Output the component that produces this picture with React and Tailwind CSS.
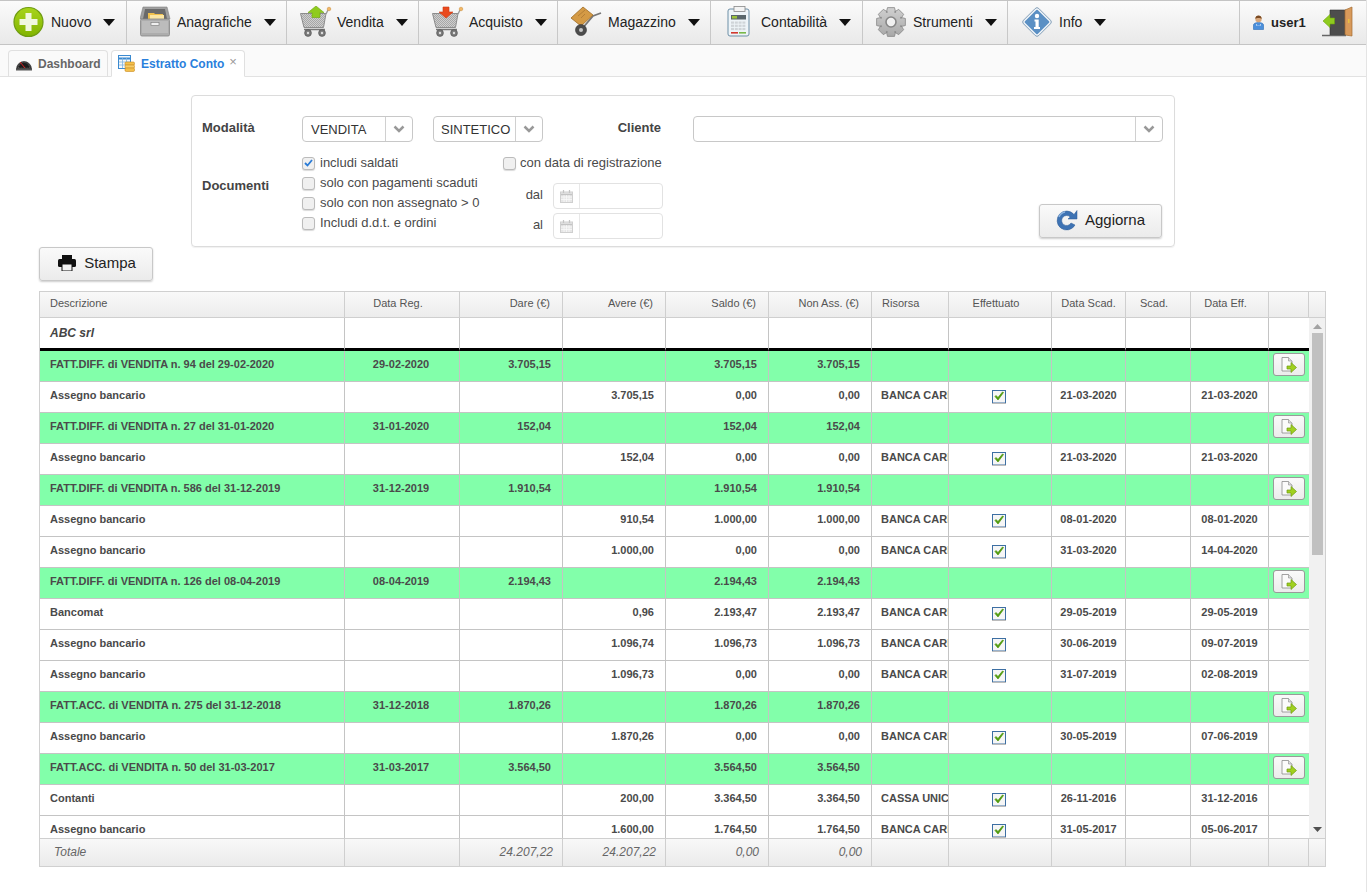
import React from "react";

const GRID =
  "grid grid-cols-[305px_115px_103px_103px_103px_103px_77px_103px_74px_65px_78px_40px]";

const navItems = [
  { label: "Nuovo", icon: <PlusIcon />, w: "w-[127px]", gap: "ml-[7px]" },
  { label: "Anagrafiche", icon: <CabinetIcon />, w: "w-[160px]", gap: "ml-[6px]" },
  { label: "Vendita", icon: <CartIcon up />, w: "w-[132px]", gap: "ml-[6px]" },
  { label: "Acquisto", icon: <CartIcon />, w: "w-[139px]", gap: "ml-[6px]" },
  { label: "Magazzino", icon: <TruckIcon />, w: "w-[153px]", gap: "ml-[6px]" },
  { label: "Contabilità", icon: <CalcIcon />, w: "w-[152px]", gap: "ml-[6px]" },
  { label: "Strumenti", icon: <GearIcon />, w: "w-[145px]", gap: "ml-[6px]" },
  { label: "Info", icon: <InfoIcon />, w: "w-[232px]", gap: "ml-[7px]" },
];

// g = fattura (verde), altrimenti pagamento
const rows = [
  { g: 1, d: "FATT.DIFF. di VENDITA n. 94 del 29-02-2020", reg: "29-02-2020", dare: "3.705,15", saldo: "3.705,15", non: "3.705,15" },
  { d: "Assegno bancario", avere: "3.705,15", saldo: "0,00", non: "0,00", ris: "BANCA CARIGE", scad: "21-03-2020", eff: "21-03-2020" },
  { g: 1, d: "FATT.DIFF. di VENDITA n. 27 del 31-01-2020", reg: "31-01-2020", dare: "152,04", saldo: "152,04", non: "152,04" },
  { d: "Assegno bancario", avere: "152,04", saldo: "0,00", non: "0,00", ris: "BANCA CARIGE", scad: "21-03-2020", eff: "21-03-2020" },
  { g: 1, d: "FATT.DIFF. di VENDITA n. 586 del 31-12-2019", reg: "31-12-2019", dare: "1.910,54", saldo: "1.910,54", non: "1.910,54" },
  { d: "Assegno bancario", avere: "910,54", saldo: "1.000,00", non: "1.000,00", ris: "BANCA CARIGE", scad: "08-01-2020", eff: "08-01-2020" },
  { d: "Assegno bancario", avere: "1.000,00", saldo: "0,00", non: "0,00", ris: "BANCA CARIGE", scad: "31-03-2020", eff: "14-04-2020" },
  { g: 1, d: "FATT.DIFF. di VENDITA n. 126 del 08-04-2019", reg: "08-04-2019", dare: "2.194,43", saldo: "2.194,43", non: "2.194,43" },
  { d: "Bancomat", avere: "0,96", saldo: "2.193,47", non: "2.193,47", ris: "BANCA CARIGE", scad: "29-05-2019", eff: "29-05-2019" },
  { d: "Assegno bancario", avere: "1.096,74", saldo: "1.096,73", non: "1.096,73", ris: "BANCA CARIGE", scad: "30-06-2019", eff: "09-07-2019" },
  { d: "Assegno bancario", avere: "1.096,73", saldo: "0,00", non: "0,00", ris: "BANCA CARIGE", scad: "31-07-2019", eff: "02-08-2019" },
  { g: 1, d: "FATT.ACC. di VENDITA n. 275 del 31-12-2018", reg: "31-12-2018", dare: "1.870,26", saldo: "1.870,26", non: "1.870,26" },
  { d: "Assegno bancario", avere: "1.870,26", saldo: "0,00", non: "0,00", ris: "BANCA CARIGE", scad: "30-05-2019", eff: "07-06-2019" },
  { g: 1, d: "FATT.ACC. di VENDITA n. 50 del 31-03-2017", reg: "31-03-2017", dare: "3.564,50", saldo: "3.564,50", non: "3.564,50" },
  { d: "Contanti", avere: "200,00", saldo: "3.364,50", non: "3.364,50", ris: "CASSA UNICA", scad: "26-11-2016", eff: "31-12-2016" },
  { d: "Assegno bancario", avere: "1.600,00", saldo: "1.764,50", non: "1.764,50", ris: "BANCA CARIGE", scad: "31-05-2017", eff: "05-06-2017" },
];

function PlusIcon() {
  return (
    <svg width="32" height="32" viewBox="0 0 32 32">
      <defs>
        <linearGradient id="pl" x1="0" y1="0" x2="0" y2="1">
          <stop offset="0" stopColor="#a8d41c" />
          <stop offset="1" stopColor="#82b400" />
        </linearGradient>
      </defs>
      <circle cx="15.500" cy="16" r="14.500" fill="url(#pl)" stroke="#6f9c12" strokeWidth="1.200" />
      <path d="M12.500 7h6v6h6v6h-6v6h-6v-6h-6v-6h6z" fill="#f1f8df" />
    </svg>
  );
}

function CabinetIcon() {
  return (
    <svg width="32" height="32" viewBox="0 0 32 32">
      <path d="M3 1h24l3 12H0z" fill="#a0a0a0" stroke="#808080" strokeWidth=".6" />
      <path d="M5 3h20l2 10H3z" fill="#6a6a6a" />
      <path d="M8 7h6l1 1h8v5H8z" fill="#f0c04c" />
      <path d="M10 9h14v4H10z" fill="#fbe6a4" />
      <rect x=".500" y="13" width="29" height="17" rx="1.500" fill="#adadad" stroke="#858585" strokeWidth=".8" />
      <rect x="2" y="15" width="26" height="12" fill="#bcbcbc" />
      <rect x="11" y="16.500" width="8" height="3" fill="#f0f0f0" stroke="#777" strokeWidth=".6" />
    </svg>
  );
}

function CartIcon({ up }) {
  const id = up ? "chk1" : "chk2";
  return (
    <svg width="32" height="32" viewBox="0 0 32 32">
      <defs>
        <pattern id={id} width="2" height="2" patternUnits="userSpaceOnUse">
          <rect width="2" height="2" fill="#cfcfcf" />
          <rect width="1" height="1" fill="#a6a6a6" />
          <rect x="1" y="1" width="1" height="1" fill="#a6a6a6" />
        </pattern>
      </defs>
      <path d="M.5 7.500h25.500l-2.500 14H4z" fill={`url(#${id})`} stroke="#8c8c8c" strokeWidth="1" />
      <path d="M26 8l2-4" stroke="#999" strokeWidth="1.400" fill="none" />
      <circle cx="29" cy="3" r="1.800" fill="#f2b766" stroke="#c98a35" strokeWidth=".5" />
      <path d="M4 23.500h21" stroke="#777" strokeWidth="1.500" />
      <circle cx="8" cy="27" r="3.400" fill="#7a7a7a" stroke="#4a4a4a" strokeWidth=".6" />
      <circle cx="8" cy="27" r="1.200" fill="#ddd" />
      <circle cx="22" cy="27" r="3.400" fill="#7a7a7a" stroke="#4a4a4a" strokeWidth=".6" />
      <circle cx="22" cy="27" r="1.200" fill="#ddd" />
      {up ? (
        <path d="M16 0l8 6.500h-4v5h-8v-5H8z" fill="#8fcb1e" stroke="#6da50e" strokeWidth=".6" />
      ) : (
        <path d="M11 1h6v5h4l-7 6-7-6h4z" fill="#ea4a1e" stroke="#cf3a12" strokeWidth=".6" />
      )}
    </svg>
  );
}

function TruckIcon() {
  return (
    <svg width="32" height="32" viewBox="0 0 32 32">
      <path d="M10 24l12-14 8-3" stroke="#777" strokeWidth="1.800" fill="none" />
      <path d="M12 1l10 8-12 11L0 12z" fill="#d49a45" stroke="#9e6c25" strokeWidth=".8" />
      <path d="M7 10l7-6M10 12l4-4" stroke="#a87430" strokeWidth=".7" />
      <circle cx="10" cy="24" r="5.500" fill="#4c4c4c" stroke="#333" strokeWidth=".6" />
      <circle cx="10" cy="24" r="2" fill="#c8c8c8" />
    </svg>
  );
}

function CalcIcon() {
  const keys = [];
  for (let r = 0; r < 3; r++)
    for (let c = 0; c < 4; c++)
      keys.push(<rect key={r + "-" + c} x={7 + c * 3.800} y={15.500 + r * 3.200} width="3" height="2.200" fill="#cfd4d8" />);
  return (
    <svg width="32" height="32" viewBox="0 0 32 32">
      <rect x="4" y="3" width="21" height="27" rx="2" fill="#eef4f8" stroke="#6d8fa6" strokeWidth="1" />
      <rect x="10" y=".5" width="11" height="5" fill="#f4f4f4" stroke="#888" strokeWidth=".8" />
      <rect x="7" y="9" width="15" height="4.500" fill="#5a666b" />
      <rect x="8" y="10" width="5" height="2.500" fill="#9ac23a" />
      {keys}
      <rect x="7" y="26" width="7" height="1.600" fill="#d23a30" />
      <rect x="15" y="26" width="7" height="1.600" fill="#79b84a" />
    </svg>
  );
}

function gearPath() {
  // ruota dentata a 8 denti
  const pts = [];
  for (let i = 0; i < 8; i++) {
    const a = (i * Math.PI) / 4;
    [[-0.46, 10.500], [-0.24, 14.800], [0.24, 14.800], [0.46, 10.500]].forEach(([da, rad]) => {
      pts.push((15 + rad * Math.cos(a + da)).toFixed(2) + " " + (16 + rad * Math.sin(a + da)).toFixed(2));
    });
  }
  return "M" + pts.join("L") + "z";
}

function GearIcon() {
  return (
    <svg width="32" height="32" viewBox="0 0 32 32">
      <defs>
        <linearGradient id="gr" x1="0" y1="0" x2="0" y2="1">
          <stop offset="0" stopColor="#d0d0d0" />
          <stop offset="1" stopColor="#a8a8a8" />
        </linearGradient>
      </defs>
      <path d={gearPath()} fill="url(#gr)" stroke="#868686" strokeWidth=".8" />
      <circle cx="15" cy="16" r="5" fill="#f0f0f0" stroke="#868686" strokeWidth="1.600" />
    </svg>
  );
}

function InfoIcon() {
  return (
    <svg width="32" height="32" viewBox="0 0 32 32">
      <rect x="6" y="6" width="20" height="20" rx="2" transform="rotate(45 16 16)" fill="#5b90c4" stroke="#f0f4f8" strokeWidth="2" />
      <rect x="5.200" y="5.200" width="21.600" height="21.600" rx="2.500" transform="rotate(45 16 16)" fill="none" stroke="#5a7f9f" strokeWidth=".7" />
      <circle cx="16" cy="10" r="2.200" fill="#fff" />
      <path d="M13.500 13.500h4.200v7.500h1.300v2h-6v-2h1.500v-5.500h-1z" fill="#fff" />
    </svg>
  );
}

function UserIcon() {
  return (
    <svg width="11" height="15" viewBox="0 0 11 15">
      <path d="M.5 14.500V10c0-1.500 2-2.500 5-2.500s5 1 5 2.500v4.500z" fill="#4a8fdc" stroke="#2d6cb4" strokeWidth=".6" />
      <path d="M3 9l2.500 2L8 9v1.500H3z" fill="#eef4fb" />
      <circle cx="5.500" cy="4" r="3.200" fill="#d8a77c" />
      <path d="M2.300 4C2.300 1.500 3.800.5 5.500.5S8.700 1.500 8.700 4C7.500 2.800 3.500 2.800 2.300 4z" fill="#7a4a22" />
    </svg>
  );
}

function DoorIcon() {
  return (
    <svg width="32" height="32" viewBox="0 0 32 32">
      <path d="M8 4h16v25H8z" fill="#4d4d4d" stroke="#2f2f2f" strokeWidth=".6" />
      <path d="M23 4l7-3v29l-7-1z" fill="#d89a5b" stroke="#a36b30" strokeWidth=".7" />
      <path d="M26 13h1.500v4H26z" fill="#e8c040" />
      <path d="M0 29.500h24" stroke="#666" strokeWidth="1.500" />
      <path d="M1 15l7-6.500V12h4.500v6H8v3.500z" fill="#8fcb1e" stroke="#6da50e" strokeWidth=".6" />
    </svg>
  );
}

function GaugeIcon() {
  return (
    <svg width="16" height="14" viewBox="0 0 16 14">
      <path d="M.5 12a7.500 7.500 0 0 1 15 0z" fill="#3a3a3a" stroke="#222" strokeWidth=".6" />
      <path d="M2.500 11a5.500 5.500 0 0 1 11 0z" fill="#1c1c1c" stroke="#888" strokeWidth=".5" strokeDasharray="1 1" />
      <path d="M4 5l5 6" stroke="#d22" strokeWidth="1" />
      <rect x="0" y="11.500" width="16" height="2" fill="#555" />
    </svg>
  );
}

function TableCoinsIcon() {
  return (
    <svg width="17" height="17" viewBox="0 0 17 17">
      <rect x=".5" y=".5" width="12" height="13" fill="#f4f8fc" stroke="#3b8ad0" />
      <path d="M.5 3.500h12" stroke="#3b8ad0" strokeWidth="2" />
      <path d="M4.500 3v10M8.500 3v10M1 7h11M1 10h11" stroke="#7fb4e2" strokeWidth=".8" />
      <rect x="7" y="7" width="9.500" height="3.200" rx="1.200" fill="#f3c04d" stroke="#c98a1c" strokeWidth=".6" />
      <rect x="7" y="10" width="9.500" height="3.200" rx="1.200" fill="#f6cd6a" stroke="#c98a1c" strokeWidth=".6" />
      <rect x="7" y="13" width="9.500" height="3.500" rx="1.200" fill="#f3c04d" stroke="#c98a1c" strokeWidth=".6" />
    </svg>
  );
}

function CalendarIcon() {
  return (
    <svg width="13" height="13" viewBox="0 0 13 13">
      <rect x=".5" y="2" width="12" height="10.500" fill="#e6e6e6" stroke="#cfcfcf" />
      <path d="M1 4.500h11" stroke="#c4c4c4" strokeWidth="1.500" />
      <path d="M3.500 0v3M9.500 0v3" stroke="#c4c4c4" strokeWidth="1.200" />
      <path d="M1 7h11M1 9.500h11M4 5v7M6.500 5v7M9 5v7" stroke="#fafafa" strokeWidth=".7" />
    </svg>
  );
}

function ReloadIcon() {
  return (
    <svg width="22" height="22" viewBox="0 0 22 22">
      <path d="M18 5.500A9.500 9.500 0 1 0 19 16l-4-2a5 5 0 1 1-.8-6L12 10h9V1.500z" fill="#3e73b4" stroke="#2d5a94" strokeWidth=".5" />
      <path d="M3 8a8 8 0 0 1 6-5" stroke="#8db4e0" strokeWidth="1.500" fill="none" />
    </svg>
  );
}

function PrinterIcon() {
  return (
    <svg width="18" height="16" viewBox="0 0 18 16">
      <rect x="4" y="0" width="10" height="4" fill="#111" />
      <rect x="0" y="4" width="18" height="8" rx="1.500" fill="#111" />
      <rect x="4" y="9" width="10" height="7" fill="#f4f4f4" stroke="#111" strokeWidth="1" />
    </svg>
  );
}

function DocArrowIcon() {
  return (
    <svg width="16" height="16" viewBox="0 0 16 16">
      <path d="M1 .5h6.500L11 4v10H1z" fill="#fbfbfb" stroke="#8c8c8c" strokeWidth=".8" />
      <path d="M7.500.5V4H11" fill="#ddd" stroke="#8c8c8c" strokeWidth=".6" />
      <path d="M6 9h4V5.500l5.500 5-5.500 5V12H6z" fill="#a0d020" stroke="#6f9c12" strokeWidth=".7" />
    </svg>
  );
}

function CheckedBox() {
  return (
    <svg width="14" height="14" viewBox="0 0 14 14">
      <rect x=".5" y=".5" width="13" height="12.500" fill="#f6f6f6" stroke="#3d6fa3" />
      <path d="M0 13.500h14" stroke="#bbb" strokeWidth="1" />
      <path d="M3 6.500l3 3.500 5.500-7.500-1-.5L6 7.500 4 5.500z" fill="#4f9a0c" stroke="#4f9a0c" strokeWidth=".7" />
    </svg>
  );
}

function Caret() {
  return (
    <svg width="12" height="7" viewBox="0 0 12 7" className="shrink-0">
      <path d="M0 0h12L6 7z" fill="#111" />
    </svg>
  );
}

function Chevron() {
  return (
    <svg width="12" height="8" viewBox="0 0 12 8">
      <path d="M1.500 1.500L6 6l4.500-4.500" fill="none" stroke="#999" strokeWidth="2.500" />
    </svg>
  );
}

function Select({ text, className, textClass = "pl-[7px]" }) {
  return (
    <div className={"h-[26px] flex border border-[#c8c8c8] rounded-[4px] bg-white text-[13px] text-[#333] " + className}>
      <div className={"flex-1 leading-[25px] whitespace-nowrap overflow-hidden " + textClass}>{text}</div>
      <div className="w-[27px] border-l border-[#d0d0d0] flex items-center justify-center">
        <Chevron />
      </div>
    </div>
  );
}

function Check({ label, checked, gap = "gap-[5px]" }) {
  return (
    <div className={"h-[20px] flex items-center text-[13px] text-[#4a4a4a] whitespace-nowrap " + gap}>
      <span className="w-[13px] h-[13px] rounded-[3px] border border-[#bbb] bg-[#f0f0f0] flex items-center justify-center shadow-[0_1px_1px_rgba(0,0,0,0.15)]">
        {checked && (
          <svg width="9" height="8" viewBox="0 0 9 8">
            <path d="M1 4l2.500 2.500L8 1" fill="none" stroke="#2a7bd6" strokeWidth="1.800" />
          </svg>
        )}
      </span>
      {label}
    </div>
  );
}

function DateField({ label }) {
  return (
    <div className="flex items-center">
      <span className="w-[50px] pr-[10px] pb-[2px] text-right text-[13px] text-[#4a4a4a]">{label}</span>
      <div className="w-[110px] h-[26px] flex border border-[#e2e2e2] rounded-[4px] bg-white">
        <div className="w-[26px] border-r border-[#e8e8e8] flex items-center justify-center">
          <CalendarIcon />
        </div>
      </div>
    </div>
  );
}

const btnClass =
  "flex items-center justify-center pb-[2px] border border-[#c8c8c8] rounded-[3px] bg-gradient-to-b from-[#fafafa] to-[#ebebeb] text-[15px] text-[#222] shadow-[0_1px_2px_rgba(0,0,0,0.2)]";

function HeadCell({ children, className = "" }) {
  return (
    <div className={"border-r border-[#cfcfcf] leading-[23px] whitespace-nowrap overflow-hidden text-[11px] text-[#555] " + className}>
      {children}
    </div>
  );
}

function Cell({ children, className = "", last }) {
  return (
    <div className={"h-[31px] border-b border-[#c4c4c4] pt-[6px] leading-[14px] whitespace-nowrap overflow-hidden " + (last ? "" : "border-r ") + className}>
      {children}
    </div>
  );
}

function Row({ r }) {
  const bg = r.g ? "bg-[#82ffaa]" : "bg-white";
  return (
    <div className={GRID + " text-[11px] font-bold text-[#4a4a4a] " + bg}>
      <Cell className="pl-[10px]">{r.d}</Cell>
      <Cell className="text-center pr-[2px]">{r.reg}</Cell>
      <Cell className="text-right pr-[11px]">{r.dare}</Cell>
      <Cell className="text-right pr-[11px]">{r.avere}</Cell>
      <Cell className="text-right pr-[11px]">{r.saldo}</Cell>
      <Cell className="text-right pr-[11px]">{r.non}</Cell>
      <Cell className="pl-[9px]">{r.ris}</Cell>
      <Cell className="flex justify-center !pt-[8px] pr-[2px]">{!r.g && <CheckedBox />}</Cell>
      <Cell className="text-center">{r.scad}</Cell>
      <Cell />
      <Cell className="text-center">{r.eff}</Cell>
      <Cell last className="pl-[4px] !pt-[2px]">
        {r.g && (
          <button className="w-[32px] h-[23px] border border-[#9a9a9a] rounded-[3px] bg-gradient-to-b from-[#fafafa] to-[#ececec] flex items-center justify-center">
            <DocArrowIcon />
          </button>
        )}
      </Cell>
    </div>
  );
}

function FootCell({ children, className = "" }) {
  return <div className={"border-r border-[#cfcfcf] leading-[26px] whitespace-nowrap " + className}>{children}</div>;
}

export default function App() {
  return (
    <div className="w-[1368px] h-[892px] overflow-hidden bg-white font-['Liberation_Sans',Arial,sans-serif]">
      <div className="w-[1367px] h-full border-r border-[#e4e4e4]">
        {/* barra menu */}
        <nav className="h-[45px] flex border-t border-b border-[#c4c4c4] bg-gradient-to-b from-[#fbfbfb] to-[#e9e9e9]">
          {navItems.map((n) => (
            <div key={n.label} className={"flex items-center pl-[13px] border-r border-[#c8c8c8] " + n.w}>
              <span className="w-[31px] h-[32px] -mt-[1px] shrink-0">{n.icon}</span>
              <span className={"text-[14px] text-[#222] " + n.gap}>{n.label}</span>
              <span className="ml-[12px] flex">
                <Caret />
              </span>
            </div>
          ))}
          <div className="flex-1 flex items-center pl-[13px]">
            <UserIcon />
            <span className="ml-[7px] text-[13px] font-bold text-[#222]">user1</span>
            <span className="ml-[16px] -mt-[1px]">
              <DoorIcon />
            </span>
          </div>
        </nav>

        {/* tab */}
        <div className="h-[32px] flex items-end gap-[3px] pl-[8px] bg-[#fafafa] border-b border-[#e2e2e2]">
          <div className="w-[100px] h-[27px] -mb-px flex items-center gap-[6px] pl-[7px] border border-[#e0e0e0] border-b-[#e2e2e2] rounded-t-[4px] bg-[#fafafa] text-[12px] font-bold text-[#666]">
            <GaugeIcon />
            Dashboard
          </div>
          <div className="w-[134px] h-[27px] -mb-px flex items-center pl-[6px] border border-[#e0e0e0] border-b-white rounded-t-[4px] bg-white text-[12px] font-bold text-[#2a7fdc]">
            <TableCoinsIcon />
            <span className="ml-[6px]">Estratto Conto</span>
            <span className="ml-[5px] -mt-[5px] text-[13px] font-normal leading-none text-[#999]">×</span>
          </div>
        </div>

        <main className="pl-[39px] pt-[18px]">
          {/* filtri */}
          <section className="ml-[152px] w-[984px] h-[152px] border border-[#dcdcdc] rounded-[4px] shadow-[0_1px_1px_rgba(0,0,0,0.06)] pl-[10px] pt-[20px]">
            <div className="flex">
              <span className="w-[100px] pt-[2px] text-[13px] font-bold text-[#444]">Modalità</span>
              <Select text="VENDITA" className="w-[111px]" textClass="pl-[8px]" />
              <Select text="SINTETICO" className="w-[110px] ml-[20px]" />
              <span className="w-[118px] pt-[2px] text-right text-[13px] font-bold text-[#444]">Cliente</span>
              <Select text="" className="w-[470px] ml-[32px]" />
            </div>
            <div className="flex mt-[11px]">
              <span className="w-[100px] mt-[23px] text-[13px] font-bold text-[#444]">Documenti</span>
              <div className="w-[201px] flex flex-col">
                <Check label="includi saldati" checked />
                <Check label="solo con pagamenti scaduti" />
                <Check label="solo con non assegnato > 0" />
                <Check label="Includi d.d.t. e ordini" />
              </div>
              <div className="w-[160px] flex flex-col">
                <Check label="con data di registrazione" gap="gap-[4px]" />
                <div className="mt-[10px] flex flex-col gap-[4px]">
                  <DateField label="dal" />
                  <DateField label="al" />
                </div>
              </div>
              <button className={btnClass + " w-[123px] h-[34px] gap-[7px] ml-[376px] mt-[51px]"}>
                <ReloadIcon />
                Aggiorna
              </button>
            </div>
          </section>

          <button className={btnClass + " w-[114px] h-[34px] gap-[8px] pl-[2px]"}>
            <PrinterIcon />
            Stampa
          </button>

          {/* tabella */}
          <div className="mt-[10px] w-[1287px] border border-[#d0d0d0]">
            <div className="flex h-[26px] border-b border-[#cfcfcf] bg-gradient-to-b from-[#f9f9f9] to-[#ececec]">
              <div className={GRID + " flex-1"}>
                <HeadCell className="pl-[10px]">Descrizione</HeadCell>
                <HeadCell className="text-center pr-[8px]">Data Reg.</HeadCell>
                <HeadCell className="text-right pr-[12px]">Dare (€)</HeadCell>
                <HeadCell className="text-right pr-[12px]">Avere (€)</HeadCell>
                <HeadCell className="text-right pr-[12px]">Saldo (€)</HeadCell>
                <HeadCell className="text-right pr-[12px]">Non Ass. (€)</HeadCell>
                <HeadCell className="pl-[10px]">Risorsa</HeadCell>
                <HeadCell className="text-center pr-[8px]">Effettuato</HeadCell>
                <HeadCell className="text-center">Data Scad.</HeadCell>
                <HeadCell className="text-center pr-[8px]">Scad.</HeadCell>
                <HeadCell className="text-center pr-[8px]">Data Eff.</HeadCell>
                <HeadCell />
              </div>
              <div className="w-[16px]" />
            </div>

            <div className="flex h-[520px] overflow-hidden">
              <div className="flex-1 overflow-hidden">
                <div className={GRID + " bg-white"}>
                  <div className="h-[33px] border-r border-b-[3px] border-[#c4c4c4] border-b-black pl-[10px] pt-[8px] text-[12px] leading-[15px] italic font-bold text-[#444]">
                    ABC srl
                  </div>
                  {Array.from({ length: 11 }, (_, i) => (
                    <div key={i} className={"h-[33px] border-b-[3px] border-b-black border-[#c4c4c4] " + (i < 10 ? "border-r" : "")} />
                  ))}
                </div>
                {rows.map((r, i) => (
                  <Row key={i} r={r} />
                ))}
              </div>
              {/* scrollbar */}
              <div className="w-[16px] bg-[#f1f1f1] flex flex-col items-center">
                <svg width="9" height="5" viewBox="0 0 9 5" className="mt-[6px]">
                  <path d="M4.500 0L9 5H0z" fill="#a3a3a3" />
                </svg>
                <div className="w-[11px] h-[222px] mt-[4px] bg-[#c0c0c0]" />
                <svg width="9" height="5" viewBox="0 0 9 5" className="mt-auto mb-[6px]">
                  <path d="M0 0h9L4.500 5z" fill="#505050" />
                </svg>
              </div>
            </div>

            <div className="flex h-[28px] border-t border-[#cfcfcf] bg-gradient-to-b from-[#f8f8f8] to-[#ebebeb] italic text-[12px] text-[#666]">
              <div className={GRID + " flex-1"}>
                <FootCell className="pl-[14px]">Totale</FootCell>
                <FootCell />
                <FootCell className="text-right pr-[9px]">24.207,22</FootCell>
                <FootCell className="text-right pr-[9px]">24.207,22</FootCell>
                <FootCell className="text-right pr-[9px]">0,00</FootCell>
                <FootCell className="text-right pr-[9px]">0,00</FootCell>
                <FootCell />
                <FootCell />
                <FootCell />
                <FootCell />
                <FootCell />
                <FootCell />
              </div>
              <div className="w-[16px]" />
            </div>
          </div>
        </main>
      </div>
    </div>
  );
}
